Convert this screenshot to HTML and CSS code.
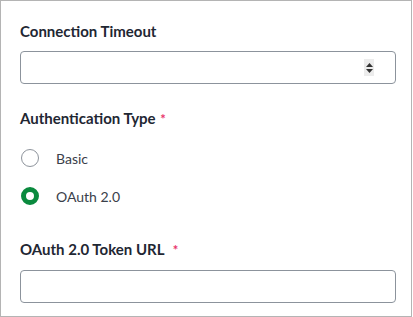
FILE: index.html
```html
<!DOCTYPE html>
<html>
<head>
<meta charset="utf-8">
<link rel="stylesheet" href="styles.css">
</head>
<body>
<div class="panel">
  <div class="field">
    <label class="label">Connection Timeout</label>
    <div class="input">
      <span class="spinner">
        <svg width="9" height="14" viewBox="0 0 9 14"><path d="M4.5 2 L8 6 H1 Z" fill="#333"/><path d="M4.5 12 L8 8 H1 Z" fill="#333"/></svg>
      </span>
    </div>
  </div>
  <div class="field group">
    <div class="label">Authentication Type <span class="req">*</span></div>
    <div class="radios">
      <div class="radio-row"><span class="radio"></span><span class="rlabel">Basic</span></div>
      <div class="radio-row"><span class="radio checked"></span><span class="rlabel">OAuth 2.0</span></div>
    </div>
  </div>
  <div class="field">
    <label class="label">OAuth 2.0 Token URL <span class="req req2">*</span></label>
    <div class="input"></div>
  </div>
</div>
</body>
</html>
```
FILE: styles.css
```css
html, body { margin: 0; padding: 0; background: #fff; }
body { font-family: Lato, "Noto Sans", sans-serif; color: #1e2633; }
.panel {
  width: 412px;
  height: 317px;
  box-sizing: border-box;
  border: 1px solid #b4b4b4;
  padding: 21px 15px 0 19px;
  display: flex;
  flex-direction: column;
}
.field { display: flex; flex-direction: column; }
.label {
  display: block;
  font-weight: 700;
  font-size: 15px;
  line-height: 18px;
  color: #1f2733;
  margin-bottom: 11px;
}
.req { color: #e8336b; font-size: 13px; font-weight: 700; margin-left: 1px; }
.req2 { margin-left: 5px; }
.input {
  height: 33px;
  box-sizing: border-box;
  border: 1px solid #8c939c;
  border-radius: 4px;
  display: flex;
  align-items: center;
  justify-content: flex-end;
  padding-right: 21px;
}
.spinner {
  width: 10px;
  height: 17px;
  background: #ececec;
  display: flex;
  align-items: center;
  justify-content: center;
}
.group { margin-top: 25px; }
.radios { display: flex; flex-direction: column; gap: 18px; margin-top: 9px; }
.radio-row { display: flex; align-items: center; height: 20px; }
.radio {
  width: 18px; height: 18px;
  box-sizing: border-box;
  border: 1px solid #8e949c;
  border-radius: 50%;
  margin-left: 1px;
}
.radio.checked { border: 5px solid #0a8a3e; }
.rlabel { margin-left: 17px; font-size: 14px; color: #3a404a; }
.group + .field { margin-top: 34px; }
```
